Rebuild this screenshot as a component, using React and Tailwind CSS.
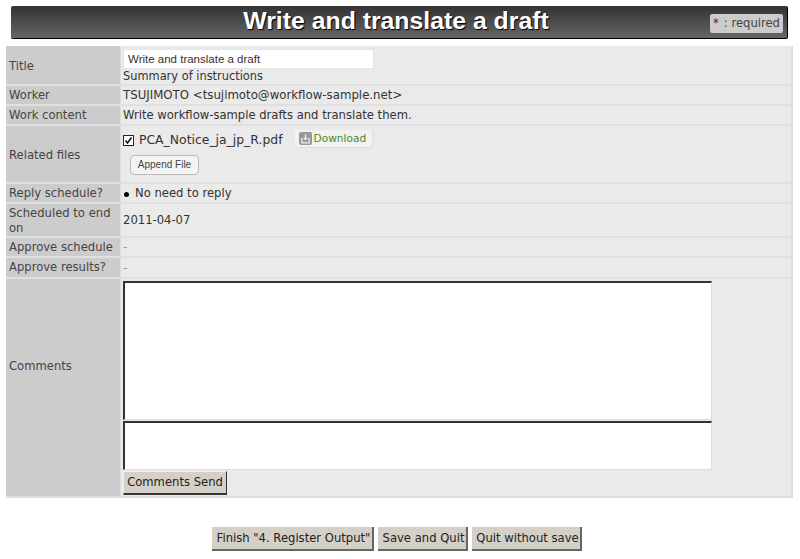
import React from 'react';

const Row = ({ label, className = '', labelClass = 'pt-[1px]', valueClass = 'pt-[2px]', children }) => (
  <div className={`flex border-b-2 border-[#e0e0e0] ${className}`}>
    <div className={`w-[115px] shrink-0 flex items-center pl-[3px] pr-1 bg-[#cccccc] border-r border-[#dddddd] text-[#444444] ${labelClass}`}>{label}</div>
    <div className={`flex-1 flex items-center pl-[2px] bg-[#eaeaea] min-w-0 ${valueClass}`}>{children}</div>
  </div>
);

const Dash = () => <span className="text-[#999999]">-</span>;

const FooterButton = ({ className = '', children }) => (
  <button className={`h-[24px] pt-[1px] pl-[3px] bg-[#d4d0c8] border-b-2 border-r-2 border-[#666666] text-[11.6px] text-[#222222] ${className}`}>{children}</button>
);

export default function App() {
  return (
    <div className="w-[800px] h-[559px] overflow-hidden bg-white text-[11.6px] text-[#333333] font-['DejaVu_Sans',Verdana,sans-serif]">
      <div className="pt-[6px] pl-[11px] pr-[12px]">
        <div className="relative h-[33px] flex items-center justify-center rounded-[2px] border-b border-r border-black bg-gradient-to-b from-[#333333] to-[#666666]">
          <h1 className="text-[24.8px] font-bold leading-none text-white [text-shadow:1px_1px_1px_#000] -mt-[2px] mr-[6px] font-['Liberation_Sans',Arial,sans-serif]">Write and translate a draft</h1>
          <div className="absolute right-[4px] top-[8px] w-[73px] h-[19px] pl-[3px] flex items-center rounded-[2px] bg-[#cccccc] text-[#444444]">
            <span className="text-[#990033] mr-[5px]">*</span>: required
          </div>
        </div>
      </div>

      <div className="mt-[7px] ml-[6px] w-[787px] border-r-2 border-[#dddddd]">
        <Row label="Title" className="h-[40px]" labelClass="pt-[3px]" valueClass="">
          <div className="flex flex-col pt-[2px]">
            <input readOnly value="Write and translate a draft" className="w-[251px] h-[20px] px-[4px] bg-white border border-[#e4e4e4] text-[11.5px] text-[#333333] outline-none font-['Liberation_Sans',Arial,sans-serif]" />
            <span className="leading-[15px] text-[11.4px]">Summary of instructions</span>
          </div>
        </Row>
        <Row label="Worker" className="h-[20px]" labelClass="pt-[2px]"><span className="text-[11.77px]">TSUJIMOTO &lt;tsujimoto@workflow-sample.net&gt;</span></Row>
        <Row label="Work content" className="h-[20px]" labelClass="pt-[2px]">Write workflow-sample drafts and translate them.</Row>
        <Row label="Related files" className="h-[58px]" labelClass="pt-[3px]" valueClass="">
          <div className="flex flex-col -mt-[5px]">
            <div className="flex items-center h-[24px]">
              <span className="w-[11px] h-[11px] flex items-center justify-center border border-[#222222] bg-white">
                <svg width="9" height="9" viewBox="0 0 9 9" fill="none"><path d="M1.5 4.5 3.5 7 7.5 1.5" stroke="#111111" strokeWidth="1.6" /></svg>
              </span>
              <span className="ml-[5px] text-[12.4px]">PCA_Notice_ja_jp_R.pdf</span>
              <span className="ml-[12px] -mt-[3px] h-[18px] w-[78px] flex items-center pl-[4px] rounded-[2px] bg-[#f2f2f2] border-b border-r border-[#dddddd] text-[10.6px] text-[#4a8a2a]">
                <span className="w-[13px] h-[13px] mr-[2px] flex items-center justify-center rounded-[2px] bg-[#999999]">
                  <svg width="11" height="11" viewBox="0 0 9 9" fill="none" stroke="#eeeeee" strokeWidth="1"><path d="M1.5 4v4h6V4M4.5 1v4.5M3 4l1.5 1.5L6 4" /></svg>
                </span>
                Download
              </span>
            </div>
            <button className="mt-[2px] ml-[7px] w-[69px] h-[20px] rounded-[4px] border border-[#bbbbbb] bg-[#f4f4f4] text-[#444444] text-[10px] font-['Liberation_Sans',Arial,sans-serif]">Append File</button>
          </div>
        </Row>
        <Row label="Reply schedule?" className="h-[20px]">
          <span className="w-[5px] h-[5px] ml-[1px] rounded-full bg-black" />
          <span className="ml-[6px]">No need to reply</span>
        </Row>
        <Row label="Scheduled to end on" className="h-[34px]" labelClass="pt-[1px] leading-[15px]">2011-04-07</Row>
        <Row label="Approve schedule" className="h-[20px]" labelClass="pt-[1px] whitespace-nowrap"><Dash /></Row>
        <Row label="Approve results?" className="h-[21px]"><Dash /></Row>
        <Row label="Comments" className="h-[219px]" labelClass="pb-[41px]" valueClass="">
          <div className="flex flex-col">
            <div className="w-[589px] h-[139px] bg-white border-t-2 border-l-2 border-[#333333] border-r border-b border-r-[#dddddd] border-b-[#dddddd]" />
            <div className="mt-[1px] w-[589px] h-[49px] bg-white border-t-2 border-l-2 border-[#333333] border-r border-b border-r-[#dddddd] border-b-[#dddddd]" />
            <button className="mt-[1px] w-[104px] h-[24px] pt-[1px] bg-[#d4d0c8] border-b-2 border-r border-[#333333] border-t border-l border-t-[#eeeeee] border-l-[#eeeeee] text-[11.6px] text-[#222222]">Comments Send</button>
          </div>
        </Row>
      </div>

      <div className="mt-[29px] ml-[212px] flex gap-[4px]">
        <FooterButton className="w-[162px]">Finish "4. Register Output"</FooterButton>
        <FooterButton className="w-[90px]">Save and Quit</FooterButton>
        <FooterButton className="w-[110px]">Quit without save</FooterButton>
      </div>
    </div>
  );
}
